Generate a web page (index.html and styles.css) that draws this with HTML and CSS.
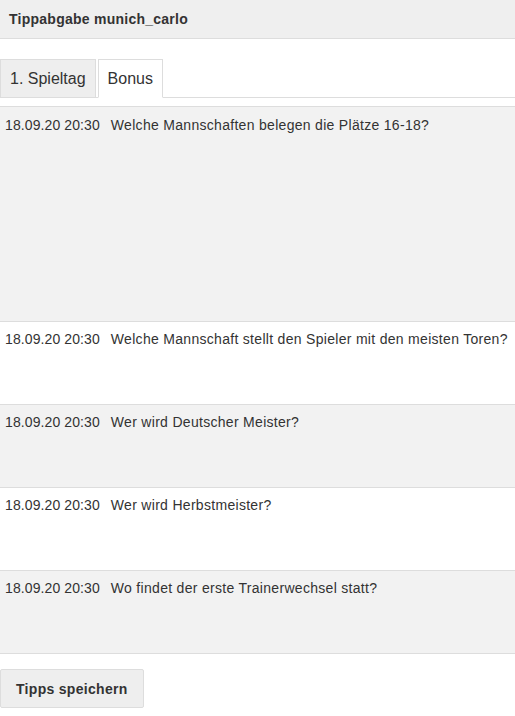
FILE: index.html
```html
<!DOCTYPE html>
<html lang="de">
<head>
  <meta charset="UTF-8">
  <meta name="viewport" content="width=device-width, initial-scale=1.0">
  <title>Tippabgabe</title>
  <link rel="stylesheet" href="styles.css">
</head>
<body>
  <div class="header">Tippabgabe munich_carlo</div>

  <ul class="tabs">
    <li class="tab">1. Spieltag</li>
    <li class="tab active">Bonus</li>
  </ul>

  <div class="bonus-list">
    <div class="bonus-row first">
      <span class="date">18.09.20 20:30</span>
      <span class="question">Welche Mannschaften belegen die Plätze 16-18?</span>
    </div>
    <div class="bonus-row">
      <span class="date">18.09.20 20:30</span>
      <span class="question">Welche Mannschaft stellt den Spieler mit den meisten Toren?</span>
    </div>
    <div class="bonus-row">
      <span class="date">18.09.20 20:30</span>
      <span class="question">Wer wird Deutscher Meister?</span>
    </div>
    <div class="bonus-row">
      <span class="date">18.09.20 20:30</span>
      <span class="question">Wer wird Herbstmeister?</span>
    </div>
    <div class="bonus-row">
      <span class="date">18.09.20 20:30</span>
      <span class="question">Wo findet der erste Trainerwechsel statt?</span>
    </div>
  </div>

  <button class="save-btn">Tipps speichern</button>
</body>
</html>
```

FILE: styles.css
```css
body {
  margin: 0;
  font-family: "Liberation Sans", Arial, sans-serif;
  color: #333;
  background: #fff;
}
.header {
  height: 39px;
  line-height: 38px;
  padding-left: 9px;
  font-size: 14px;
  font-weight: bold;
  letter-spacing: 0.25px;
  background: #efefef;
  border-bottom: 1px solid #ddd;
  box-sizing: border-box;
}
.tabs {
  list-style: none;
  margin: 20px 0 0 0;
  padding: 0;
  display: flex;
  gap: 2px;
  border-bottom: 1px solid #ddd;
}
.tab {
  padding: 9px 9px 8px;
  font-size: 16px;
  line-height: 20px;
  background: #eee;
  border: 1px solid #ddd;
  margin-bottom: -1px;
}
.tab.active {
  background: #fff;
  border-bottom-color: #fff;
}
.bonus-list {
  margin-top: 8px;
  border-top: 1px solid #ddd;
}
.bonus-row {
  display: flex;
  align-items: flex-start;
  min-height: 83px;
  box-sizing: border-box;
  padding: 7px 5px;
  font-size: 14px;
  line-height: 20px;
  letter-spacing: 0.3px;
  border-bottom: 1px solid #ddd;
}
.bonus-row:nth-child(odd) {
  background: #f2f2f2;
}
.bonus-row.first {
  min-height: 215px;
  padding-top: 8px;
}
.date {
  white-space: nowrap;
  letter-spacing: 0.1px;
}
.question {
  padding-left: 11px;
}
.save-btn {
  display: block;
  margin-top: 15px;
  height: 39px;
  padding: 0 15px;
  font-family: "Liberation Sans", Arial, sans-serif;
  font-size: 14px;
  font-weight: bold;
  letter-spacing: 0.3px;
  color: #333;
  background: #eee;
  border: 1px solid #ddd;
  border-radius: 2px;
}
```
